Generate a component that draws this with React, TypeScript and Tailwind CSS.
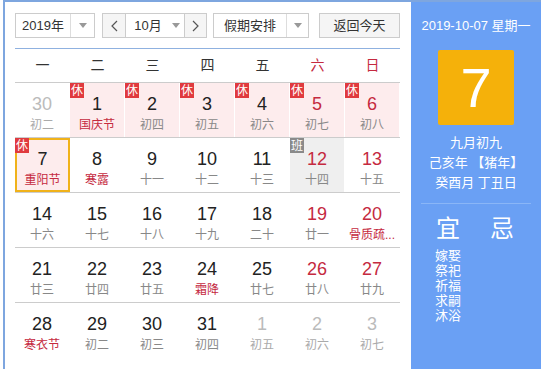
import React from 'react';

type Day = {
  n: number;
  sub: string;
  red?: boolean;
  subRed?: boolean;
  other?: boolean;
  rest?: boolean;
  work?: boolean;
  today?: boolean;
};

const weeks: Day[][] = [
  [
    { n: 30, sub: '初二', other: true },
    { n: 1, sub: '国庆节', subRed: true, rest: true },
    { n: 2, sub: '初四', rest: true },
    { n: 3, sub: '初五', rest: true },
    { n: 4, sub: '初六', rest: true },
    { n: 5, sub: '初七', red: true, rest: true },
    { n: 6, sub: '初八', red: true, rest: true },
  ],
  [
    { n: 7, sub: '重阳节', subRed: true, rest: true, today: true },
    { n: 8, sub: '寒露', subRed: true },
    { n: 9, sub: '十一' },
    { n: 10, sub: '十二' },
    { n: 11, sub: '十三' },
    { n: 12, sub: '十四', red: true, work: true },
    { n: 13, sub: '十五', red: true },
  ],
  [
    { n: 14, sub: '十六' },
    { n: 15, sub: '十七' },
    { n: 16, sub: '十八' },
    { n: 17, sub: '十九' },
    { n: 18, sub: '二十' },
    { n: 19, sub: '廿一', red: true },
    { n: 20, sub: '骨质疏...', red: true, subRed: true },
  ],
  [
    { n: 21, sub: '廿三' },
    { n: 22, sub: '廿四' },
    { n: 23, sub: '廿五' },
    { n: 24, sub: '霜降', subRed: true },
    { n: 25, sub: '廿七' },
    { n: 26, sub: '廿八', red: true },
    { n: 27, sub: '廿九', red: true },
  ],
  [
    { n: 28, sub: '寒衣节', subRed: true },
    { n: 29, sub: '初二' },
    { n: 30, sub: '初三' },
    { n: 31, sub: '初四' },
    { n: 1, sub: '初五', other: true },
    { n: 2, sub: '初六', other: true },
    { n: 3, sub: '初七', other: true },
  ],
];

const weekdays = ['一', '二', '三', '四', '五', '六', '日'];

const Caret = () => (
  <svg width="8" height="5" viewBox="0 0 8 5">
    <path d="M0 0 L8 0 L4 5 Z" fill="#999" />
  </svg>
);

const Chevron = ({ dir }: { dir: 'l' | 'r' }) => (
  <svg width="7" height="12" viewBox="0 0 7 12">
    <path
      d={dir === 'l' ? 'M6 1 L1 6 L6 11' : 'M1 1 L6 6 L1 11'}
      fill="none"
      stroke="#555"
      strokeWidth="1.2"
    />
  </svg>
);

const Cell = ({ d }: { d: Day }) => {
  let bg = 'bg-white';
  if (d.rest) bg = 'bg-[#fdeced]';
  if (d.work) bg = 'bg-[#efefef]';
  const numColor = d.other ? 'text-[#bbb]' : d.red ? 'text-[#c52a3f]' : 'text-[#222]';
  const subColor = d.other ? 'text-[#aaa]' : d.subRed ? 'text-[#c52a3f]' : 'text-[#888]';
  const frame = d.today ? 'border-2 border-[#f0b21a]' : 'border-r border-white';
  return (
    <div className={`relative h-[54px] ${bg} ${frame}`}>
      {(d.rest || d.work) && (
        <div
          className={`absolute w-[14px] h-[15px] flex items-center justify-center text-[12px] leading-none text-white ${
            d.work ? 'bg-[#8a8a8a]' : 'bg-[#e03a3e]'
          } ${d.today ? '-left-[2px] -top-[2px]' : 'left-0 top-0'}`}
        >
          {d.rest ? '休' : '班'}
        </div>
      )}
      <div className={`flex flex-col items-center ${d.today ? 'pt-[9px]' : 'pt-[11px]'}`}>
        <div className={`text-[18px] leading-[20px] ${numColor}`}>{d.n}</div>
        <div className={`text-[12px] leading-[16px] mt-[3px] whitespace-nowrap ${subColor}`}>{d.sub}</div>
      </div>
    </div>
  );
};

export default function App() {
  return (
    <div className="w-[541px] h-[369px] overflow-hidden bg-white font-['Liberation_Sans','Noto_Sans_CJK_SC',sans-serif]">
      <div className="ml-[3px] h-[369px] flex border-l-2 border-t-2 border-[#7ea6df]">
        {/* Left calendar */}
        <div className="w-[406px] pl-[10px] pr-[11px] pt-[11px]">
          <div className="flex items-center h-[25px] text-[13px] text-[#333]">
            <div className="flex h-[25px] w-[80px] border border-[#ccc]">
              <div className="flex-1 flex items-center justify-center border-r border-[#ddd]">2019年</div>
              <div className="w-[23px] flex items-center justify-center">
                <Caret />
              </div>
            </div>
            <div className="flex h-[25px] ml-[7px] border border-[#ccc]">
              <div className="w-[23px] flex items-center justify-center bg-[#f5f5f5] border-r border-[#ccc]">
                <Chevron dir="l" />
              </div>
              <div className="w-[58px] flex items-center justify-center gap-[10px] pl-[4px]">
                <span>10月</span>
                <Caret />
              </div>
              <div className="w-[22px] flex items-center justify-center bg-[#f5f5f5] border-l border-[#ccc]">
                <Chevron dir="r" />
              </div>
            </div>
            <div className="flex h-[25px] w-[96px] ml-[6px] border border-[#ccc]">
              <div className="flex-1 flex items-center justify-center border-r border-[#ddd]">假期安排</div>
              <div className="w-[21px] flex items-center justify-center">
                <Caret />
              </div>
            </div>
            <div className="ml-auto h-[25px] w-[81px] flex items-center justify-center bg-[#f5f5f5] border border-[#ccc]">
              返回今天
            </div>
          </div>

          <div className="mt-[10px] border-t border-[#8fb1e0]" />

          <div className="grid grid-cols-7 h-[33px] items-center text-[14px]">
            {weekdays.map((w, i) => (
              <div key={w} className={`text-center ${i >= 5 ? 'text-[#c52a3f]' : 'text-[#333]'}`}>
                {w}
              </div>
            ))}
          </div>

          {weeks.map((row, ri) => (
            <div key={ri} className="grid grid-cols-7 border-t border-[#ccc] h-[55px]">
              {row.map((d, ci) => (
                <Cell key={ci} d={d} />
              ))}
            </div>
          ))}
        </div>

        {/* Right panel */}
        <div className="flex-1 bg-[#6aa0f4] text-white flex flex-col items-center">
          <div className="mt-[15px] text-[13px] leading-[18px]">2019-10-07 星期一</div>
          <div className="mt-[15px] w-[76px] h-[75px] rounded-[2px] bg-[#f5b10a] flex items-center justify-center">
            <span className="text-[56px] leading-none font-light">7</span>
          </div>
          <div className="mt-[8px] text-[13px] leading-[20px] text-center">
            <div>九月初九</div>
            <div>己亥年 【猪年】</div>
            <div>癸酉月 丁丑日</div>
          </div>
          <div className="mt-[10px] w-[110px] border-t border-[#8ab6f7]" />
          <div className="w-[110px] mt-[10px] flex">
            <div className="flex-1 flex flex-col items-start pl-[14px]">
              <div className="text-[24px] leading-[30px] pl-[1px]">宜</div>
              <div className="mt-[4px] text-[13px] leading-[15px]">
                <div>嫁娶</div>
                <div>祭祀</div>
                <div>祈福</div>
                <div>求嗣</div>
                <div>沐浴</div>
              </div>
            </div>
            <div className="flex-1 pl-[14px]">
              <div className="text-[24px] leading-[30px]">忌</div>
            </div>
          </div>
        </div>
      </div>
    </div>
  );
}
